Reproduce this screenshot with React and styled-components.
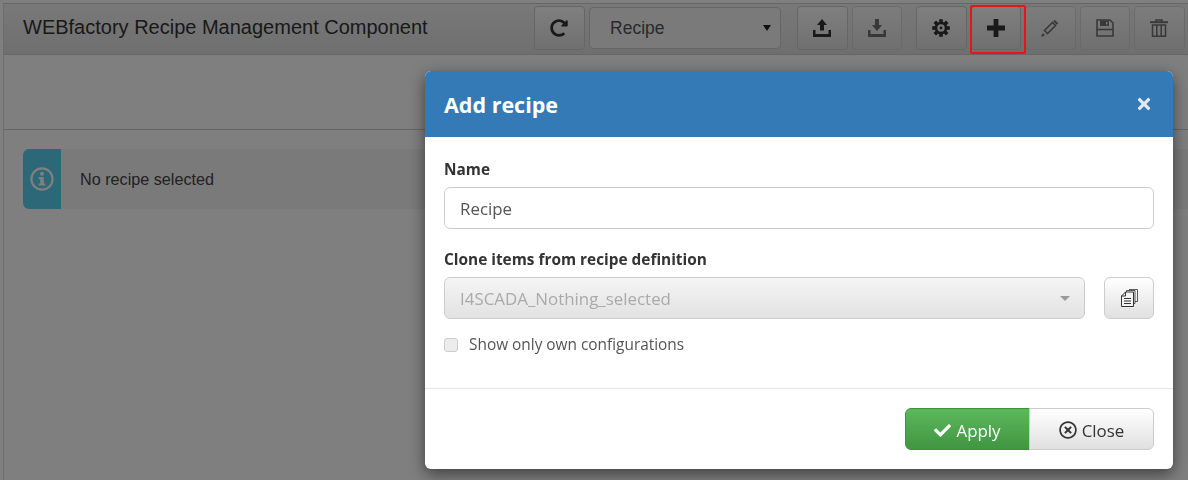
import React from 'react';
import styled, { createGlobalStyle } from 'styled-components';
import { FaCheck, FaRedoAlt, FaRegTimesCircle, FaTimes } from 'react-icons/fa';

const GlobalStyle = createGlobalStyle`
  html, body {
    margin: 0;
    padding: 0;
    height: 480px;
    overflow: hidden;
    background: #fff;
  }
  * {
    box-sizing: border-box;
  }
`;

const Page = styled.div`
  width: 1188px;
  height: 480px;
  padding: 3px 0 0 3px;
  font-family: 'Liberation Sans', Arial, sans-serif;
  color: #333;
`;

const Panel = styled.div`
  border-top: 1px solid #ccc;
  border-left: 1px solid #ddd;
  height: 100%;
`;

const Header = styled.header`
  display: flex;
  align-items: center;
  justify-content: space-between;
  height: 51px;
  padding: 0 3.4px 2px 19px;
  background: linear-gradient(to bottom, #f2f2f2, #dedede);
  border-bottom: 1px solid #ccc;
`;

const Title = styled.h1`
  margin: 0 0 2px;
  font-size: 20px;
  font-weight: 400;
  line-height: 24px;
`;

const Toolbar = styled.div`
  display: flex;
  align-items: center;
`;

const Group = styled.div`
  display: flex;
  gap: 4px;
  margin-left: ${props => props.$gap || 0}px;
`;

const ToolButton = styled.button`
  position: relative;
  display: flex;
  align-items: center;
  justify-content: center;
  width: 50.5px;
  height: 44px;
  padding: 0;
  border: 1px solid #ccc;
  border-radius: 4px;
  background: linear-gradient(to bottom, #fff, #e0e0e0);
  color: #333;
  opacity: ${props => (props.$off ? 0.65 : 1)};
`;

const Highlight = styled.span`
  position: absolute;
  top: -2px;
  left: -2px;
  width: 56px;
  height: 49px;
  border: 2px solid #e8141c;
  border-radius: 2px;
  z-index: 20;
`;

const RecipeSelect = styled.div`
  display: flex;
  align-items: center;
  justify-content: space-between;
  width: 192px;
  height: 42px;
  margin-left: 4.5px;
  padding: 0 9px 0 20px;
  border: 1px solid #ccc;
  border-radius: 4px;
  background: #f4f4f4;
  font-size: 17.5px;
  color: #555;
`;

const SelectArrow = styled.span`
  width: 0;
  height: 0;
  border-left: 4px solid transparent;
  border-right: 4px solid transparent;
  border-top: 6px solid #222;
`;

const SubBar = styled.div`
  height: 75px;
  border-bottom: 1px solid #ccc;
`;

const Content = styled.div`
  padding: 19px 0 0 19px;
`;

const InfoBar = styled.div`
  display: flex;
  align-items: center;
  height: 60px;
  background: #f5f5f5;
  border-radius: 6px 0 0 6px;
`;

const InfoIconBox = styled.div`
  display: flex;
  align-items: center;
  justify-content: center;
  width: 38px;
  height: 100%;
  background: #5ad0f0;
  border-radius: 6px 0 0 6px;
  color: #fff;
`;

const InfoText = styled.span`
  margin-left: 19px;
  font-size: 16.2px;
  color: #444;
`;

const Backdrop = styled.div`
  position: fixed;
  inset: 0;
  background: rgba(0, 0, 0, 0.5);
  z-index: 10;
`;

const Modal = styled.div`
  position: fixed;
  top: 71px;
  left: 425px;
  width: 748px;
  height: 398px;
  display: flex;
  flex-direction: column;
  background: #fff;
  border-radius: 6px;
  overflow: hidden;
  box-shadow: 0 5px 15px rgba(0, 0, 0, 0.5);
  z-index: 30;
  font-family: 'Open Sans', sans-serif;
  color: #333;
`;

const ModalHeader = styled.div`
  display: flex;
  align-items: center;
  justify-content: space-between;
  flex: 0 0 66px;
  padding: 0 20px 0 19px;
  background: #337ab7;
  color: #fff;
`;

const ModalTitle = styled.h4`
  margin: 0;
  font-size: 21.5px;
  font-weight: 700;
`;

const ModalClose = styled.span`
  display: flex;
  font-size: 18px;
  color: #dfe9f3;
`;

const ModalBody = styled.div`
  flex: 1;
  padding: 23px 19px 0;
`;

const Label = styled.div`
  font-size: 15.4px;
  font-weight: 700;
  line-height: 20px;
  margin-bottom: 7px;
  color: #333;
`;

const NameInput = styled.div`
  display: flex;
  align-items: center;
  height: 42px;
  margin-bottom: 21px;
  padding: 0 15px;
  border: 1px solid #ccc;
  border-radius: 6px;
  font-size: 16.9px;
  color: #555;
`;

const CloneRow = styled.div`
  display: flex;
  gap: 19px;
`;

const CloneSelect = styled.div`
  flex: 1;
  display: flex;
  align-items: center;
  justify-content: space-between;
  height: 42px;
  padding: 0 14px 0 15px;
  border: 1px solid #ccc;
  border-radius: 6px;
  background: linear-gradient(to bottom, #f5f5f5, #e2e2e2);
  font-size: 16.9px;
  color: #aaa;
`;

const CloneArrow = styled.span`
  width: 0;
  height: 0;
  border-left: 5px solid transparent;
  border-right: 5px solid transparent;
  border-top: 5px solid #999;
`;

const CloneButton = styled.button`
  display: flex;
  align-items: center;
  justify-content: center;
  width: 50px;
  height: 42px;
  padding: 0;
  border: 1px solid #ccc;
  border-radius: 6px;
  background: linear-gradient(to bottom, #fff, #e0e0e0);
  color: #333;
`;

const CheckRow = styled.div`
  display: flex;
  align-items: center;
  gap: 11px;
  margin-top: 15px;
  font-size: 15.4px;
  color: #555;
`;

const CheckBox = styled.span`
  width: 14px;
  height: 14px;
  border: 1px solid #ccc;
  border-radius: 3px;
  background: #ececec;
`;

const ModalFooter = styled.div`
  display: flex;
  justify-content: flex-end;
  flex: 0 0 81px;
  padding: 19px 19px 0;
  border-top: 1px solid #e5e5e5;
`;

const FooterButton = styled.button`
  display: flex;
  align-items: center;
  justify-content: center;
  gap: 5px;
  width: 125px;
  height: 42px;
  padding: 2px 0 0;
  font-family: 'Open Sans', sans-serif;
  font-size: 16.9px;
  border: 1px solid ${props => (props.$primary ? '#3e8f3e' : '#ccc')};
  border-radius: ${props => (props.$primary ? '6px 0 0 6px' : '0 6px 6px 0')};
  margin-left: ${props => (props.$primary ? 0 : '-1px')};
  background: ${props =>
    props.$primary
      ? 'linear-gradient(to bottom, #5cb85c, #419641)'
      : 'linear-gradient(to bottom, #fff, #e0e0e0)'};
  color: ${props => (props.$primary ? '#fff' : '#333')};
`;

const UploadIcon = () => (
  <svg width="18" height="18" viewBox="0 0 18 18" fill="currentColor">
    <path d="M9 0 L14 6 H11 V11.5 H7 V6 H4 Z" />
    <path d="M0 11 H2.5 V15 H15.5 V11 H18 V18 H0 Z" />
  </svg>
);

const DownloadIcon = () => (
  <svg width="18" height="18" viewBox="0 0 18 18" fill="currentColor">
    <path d="M7 0 H11 V6 H14 L9 12 L4 6 H7 Z" />
    <path d="M0 11 H2.5 V15 H15.5 V11 H18 V18 H0 Z" />
  </svg>
);

const CogIcon = () => (
  <svg width="18" height="18" viewBox="0 0 18 18" fill="currentColor">
    {[0, 45, 90, 135, 180, 225, 270, 315].map(angle => (
      <rect key={angle} x="7.2" y="0.2" width="3.6" height="4" transform={`rotate(${angle} 9 9)`} />
    ))}
    <circle cx="9" cy="9" r="5" fill="none" stroke="currentColor" strokeWidth="2.6" />
    <circle cx="9" cy="9" r="1.4" />
  </svg>
);

const PlusIcon = () => (
  <svg width="18" height="18" viewBox="0 0 18 18" fill="currentColor">
    <path d="M6.6 0 H11.4 V6.6 H18 V11.4 H11.4 V18 H6.6 V11.4 H0 V6.6 H6.6 Z" />
  </svg>
);

const PencilIcon = () => (
  <svg width="18" height="18" viewBox="0 0 18 18" fill="none" stroke="currentColor" strokeWidth="1.6">
    <path d="M3.5 11.5 L11.5 3.5 L14.5 6.5 L6.5 14.5 Z" />
    <path d="M13 1.5 L16.5 5" strokeWidth="2" />
    <path d="M0.8 17.2 L3 15" strokeWidth="2" />
  </svg>
);

const SaveIcon = () => (
  <svg width="18" height="18" viewBox="0 0 18 18" fill="none" stroke="currentColor" strokeWidth="1.6">
    <path d="M1 1 H14 L17 4 V17 H1 Z" />
    <path d="M4 1.5 H13 V7 H4 Z M10 3 V5.5 H11.5 V3 Z" fill="currentColor" fillRule="evenodd" stroke="none" />
    <path d="M1 10.5 H17" />
  </svg>
);

const TrashIcon = () => (
  <svg width="18" height="18" viewBox="0 0 18 18" fill="none" stroke="currentColor" strokeWidth="1.5">
    <path d="M0 3.2 H18" strokeWidth="2" />
    <path d="M6 3 V1 H12 V3" />
    <path d="M2.5 6 H15.5 V17.2 H2.5 Z" />
    <path d="M6.8 6 V17 M11.2 6 V17" />
  </svg>
);

const InfoIcon = () => (
  <svg width="24" height="24" viewBox="0 0 24 24" fill="currentColor">
    <circle cx="12" cy="12" r="10.6" fill="none" stroke="currentColor" strokeWidth="2.2" />
    <circle cx="12" cy="6.8" r="2" />
    <path d="M8.8 10 H13.8 V16.4 H15.4 V18.6 H8.6 V16.4 H10.2 V12.2 H8.8 Z" />
  </svg>
);

const CopyIcon = () => (
  <svg width="17" height="18" viewBox="0 0 17 18" fill="none" stroke="currentColor" strokeWidth="1">
    <path d="M5.5 3 V1.5 H14 V14.5 H12.5" strokeWidth="0.8" />
    <path d="M8 0.5 H16.5 V12.5 H14" strokeWidth="0.8" />
    <path d="M0.5 7 L4.5 3 H12.5 V17.5 H0.5 Z" fill="#f4f4f4" />
    <path d="M0.5 7 H4.5 V3" />
    <path d="M3 9.5 H10 M3 12 H10 M3 14.5 H10" strokeWidth="1.2" />
  </svg>
);

const App = () => (
  <>
    <GlobalStyle />
    <Page>
      <Panel>
        <Header>
          <Title>WEBfactory Recipe Management Component</Title>
          <Toolbar>
            <ToolButton><FaRedoAlt size={18} /></ToolButton>
            <RecipeSelect>
              Recipe
              <SelectArrow />
            </RecipeSelect>
            <Group $gap={16}>
              <ToolButton><UploadIcon /></ToolButton>
              <ToolButton $off><DownloadIcon /></ToolButton>
            </Group>
            <Group $gap={14}>
              <ToolButton><CogIcon /></ToolButton>
              <ToolButton>
                <PlusIcon />
                <Highlight />
              </ToolButton>
              <ToolButton $off><PencilIcon /></ToolButton>
              <ToolButton $off><SaveIcon /></ToolButton>
              <ToolButton $off><TrashIcon /></ToolButton>
            </Group>
          </Toolbar>
        </Header>
        <SubBar />
        <Content>
          <InfoBar>
            <InfoIconBox><InfoIcon /></InfoIconBox>
            <InfoText>No recipe selected</InfoText>
          </InfoBar>
        </Content>
      </Panel>
    </Page>
    <Backdrop />
    <Modal>
      <ModalHeader>
        <ModalTitle>Add recipe</ModalTitle>
        <ModalClose><FaTimes /></ModalClose>
      </ModalHeader>
      <ModalBody>
        <Label>Name</Label>
        <NameInput>Recipe</NameInput>
        <Label>Clone items from recipe definition</Label>
        <CloneRow>
          <CloneSelect>
            I4SCADA_Nothing_selected
            <CloneArrow />
          </CloneSelect>
          <CloneButton><CopyIcon /></CloneButton>
        </CloneRow>
        <CheckRow>
          <CheckBox />
          Show only own configurations
        </CheckRow>
      </ModalBody>
      <ModalFooter>
        <FooterButton $primary><FaCheck size={17} />Apply</FooterButton>
        <FooterButton><FaRegTimesCircle size={18} />Close</FooterButton>
      </ModalFooter>
    </Modal>
  </>
);

export default App;
